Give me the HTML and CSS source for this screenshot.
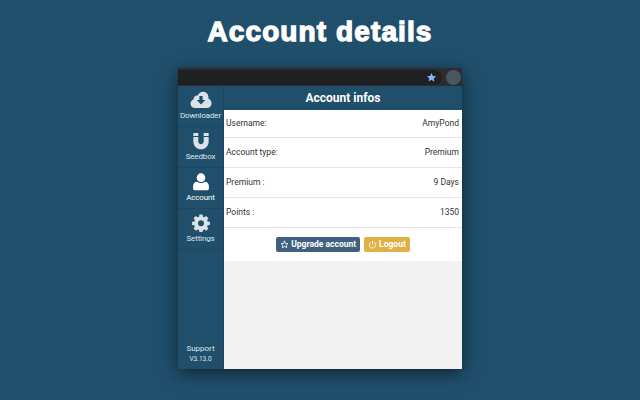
FILE: index.html
```html
<!DOCTYPE html>
<html lang="en">
<head>
  <meta charset="UTF-8" />
  <title>Account details</title>
  <link rel="stylesheet" href="styles.css">
</head>
<body>
  <h1 class="title">Account details</h1>

  <div class="window">
    <div class="toolbar">
      <div class="omnibox">
        <svg class="star" viewBox="0 0 24 24"><path d="M12 2l3 6.800 7.400.7-5.600 4.900 1.700 7.300L12 17l-6.500 3.700 1.700-7.300L1.600 9.500 9 8.800z"/></svg>
      </div>
      <div class="avatar"></div>
    </div>

    <div class="panel">
      <nav class="sidebar">
        <a class="nav-item">
          <svg class="nav-icon" viewBox="0 0 24 20"><path class="light" d="M5.500 19C2.500 19 0.300 16.800 0.300 14c0-2.300 1.500-4.200 3.500-4.900C3.900 6.200 6 4.400 8.300 5 9.500 2.400 11.800 0.800 14.300 0.800c3.300 0 5.900 2.600 6 5.900 0 .6-.1 1.200-.2 1.700 2.100.7 3.600 2.800 3.600 5.200 0 3-2.400 5.400-5.300 5.400z"/><path class="cut" d="M10.200 5.500h3.600v4.500h3L12 15 7.200 10h3z"/></svg>
          <span>Downloader</span>
        </a>
        <a class="nav-item">
          <svg class="nav-icon" viewBox="0 0 20 20"><path class="light" d="M1.500 1h5.500v3.500H1.500zM13 1h5.500v3.500H13z"/><path class="light" d="M1.500 5.500H7v4.800c0 1.800 1.300 3.200 3 3.200s3-1.400 3-3.200V5.500h5.500v5c0 5-3.800 8.700-8.500 8.700s-8.500-3.700-8.500-8.700z"/></svg>
          <span>Seedbox</span>
        </a>
        <a class="nav-item">
          <svg class="nav-icon" viewBox="0 0 20 20"><circle class="white" cx="10" cy="5.200" r="4.800"/><path class="white" d="M5.800 9.800c1.100.9 2.600 1.400 4.200 1.400s3.100-.5 4.200-1.400c2.700 0 4.600 2.300 4.600 5.200v2.300c0 1.100-.9 2-2 2H3.200c-1.100 0-2-.9-2-2V15c0-2.900 1.900-5.200 4.600-5.200z"/></svg>
          <span>Account</span>
        </a>
        <a class="nav-item">
          <svg class="nav-icon" viewBox="0 0 20 20"><path class="light" fill-rule="evenodd" d="M8.300.5h3.400l.5 2.500 1.500.6 2.100-1.400 2.400 2.400-1.400 2.100.6 1.500 2.500.5v3.400l-2.500.5-.6 1.500 1.400 2.100-2.400 2.400-2.100-1.400-1.500.6-.5 2.500H8.300l-.5-2.500-1.500-.6-2.100 1.400-2.400-2.400 1.400-2.100-.6-1.500-2.500-.5V8.700l2.500-.5.6-1.500-1.400-2.100 2.400-2.400 2.100 1.400 1.500-.6zM10 6.900a3.300 3.300 0 1 0 0 6.600 3.300 3.300 0 0 0 0-6.600z"/></svg>
          <span>Settings</span>
        </a>
        <div class="sidebar-foot">
          <span class="support">Support</span>
          <span class="version">V3.13.0</span>
        </div>
      </nav>

      <main class="content">
        <header class="content-head">Account infos</header>
        <div class="info-row"><span>Username:</span><span>AmyPond</span></div>
        <div class="info-row"><span>Account type:</span><span>Premium</span></div>
        <div class="info-row"><span>Premium :</span><span>9 Days</span></div>
        <div class="info-row"><span>Points :</span><span>1350</span></div>
        <div class="actions">
          <button class="btn btn-upgrade">
            <svg class="btn-icon" viewBox="0 0 24 24"><path class="outline" d="M12 3l2.800 6 6.500.7-4.900 4.400 1.400 6.400L12 17.200l-5.800 3.300 1.400-6.400-4.900-4.400 6.500-.7z"/></svg>
            Upgrade account
          </button>
          <button class="btn btn-logout">
            <svg class="btn-icon" viewBox="0 0 24 24"><path class="outline" d="M12 3v9M7 6a8.500 8.500 0 1 0 10 0"/></svg>
            Logout
          </button>
        </div>
      </main>
    </div>
  </div>
</body>
</html>
```

FILE: styles.css
```css
* {
  margin: 0;
  padding: 0;
  box-sizing: border-box;
}

body {
  width: 640px;
  height: 400px;
  overflow: hidden;
  background-color: #204f6c;
  font-family: "Roboto", sans-serif;
  display: flex;
  flex-direction: column;
  align-items: center;
}

.title {
  margin-top: 14px;
  height: 36px;
  line-height: 36px;
  font-family: "Liberation Sans", sans-serif;
  font-size: 28px;
  font-weight: bold;
  letter-spacing: 1.100px;
  color: #fff;
  -webkit-text-stroke: 1.300px #fff;
}

.window {
  margin-top: 18px;
  width: 284px;
  height: 301px;
  display: flex;
  flex-direction: column;
  box-shadow: 0 4px 16px rgba(0, 0, 0, 0.55);
}

.toolbar {
  height: 18px;
  background: #2c2d30;
  display: flex;
  align-items: center;
  justify-content: flex-end;
  padding-right: 1px;
  gap: 4px;
}

.omnibox {
  width: 100%;
  height: 15px;
  margin-top: 1px;
  background: #1f2023;
  border-radius: 0 8px 8px 0;
  display: flex;
  align-items: center;
  justify-content: flex-end;
  padding-right: 5px;
}

.star {
  width: 11px;
  height: 11px;
  fill: #8ab4f8;
}

.avatar {
  flex: none;
  width: 15px;
  height: 15px;
  border-radius: 50%;
  background: #4a5660;
}

.panel {
  flex: 1;
  display: flex;
  min-height: 0;
}

.sidebar {
  width: 46px;
  flex: none;
  background: #204f6c;
  border-right: 1px solid #1b4560;
  display: flex;
  flex-direction: column;
  align-items: center;
  color: #dfe6ea;
}

.nav-item {
  width: 100%;
  height: 41px;
  padding-top: 5px;
  border-bottom: 1px solid #1c4763;
  display: flex;
  flex-direction: column;
  align-items: center;
  gap: 2px;
  font-size: 8px;
  letter-spacing: -0.150px;
  line-height: 10px;
}

.nav-item:nth-child(3) {
  color: #fff;
}

.nav-icon {
  width: 22px;
  height: 18px;
}

.light {
  fill: #d9e2e8;
}

.white {
  fill: #fff;
}

.cut {
  fill: #204f6c;
}

.sidebar-foot {
  margin-top: auto;
  padding-bottom: 5px;
  display: flex;
  flex-direction: column;
  align-items: center;
  gap: 1px;
}

.support {
  font-size: 8px;
  line-height: 11px;
}

.version {
  font-size: 6.500px;
  line-height: 9px;
}

.content {
  flex: 1;
  background: #f2f2f2;
  display: flex;
  flex-direction: column;
  min-width: 0;
}

.content-head {
  height: 24px;
  background: #204f6c;
  color: #fff;
  font-size: 12px;
  font-weight: 700;
  line-height: 24px;
  text-align: center;
}

.info-row {
  height: 30px;
  background: #fff;
  border-bottom: 1px solid #e6e6e6;
  padding: 0 3px 1px 2px;
  display: flex;
  align-items: center;
  justify-content: space-between;
  font-size: 8.500px;
  color: #333;
}

.info-row:first-of-type {
  height: 28px;
}

.actions {
  height: 33px;
  background: #fff;
  padding-bottom: 1px;
  display: flex;
  align-items: center;
  justify-content: center;
  gap: 4px;
}

.btn {
  height: 15px;
  border: none;
  border-radius: 2px;
  padding: 0 4px;
  display: flex;
  align-items: center;
  gap: 2px;
  color: #fff;
  font-family: "Roboto", sans-serif;
  font-size: 8.500px;
  font-weight: 700;
}

.btn-upgrade {
  background: #40607f;
}

.btn-logout {
  background: #e0b147;
}

.btn-icon {
  width: 9px;
  height: 9px;
}

.outline {
  fill: none;
  stroke: #fff;
  stroke-width: 2.200;
  stroke-linecap: round;
  stroke-linejoin: round;
}
```
